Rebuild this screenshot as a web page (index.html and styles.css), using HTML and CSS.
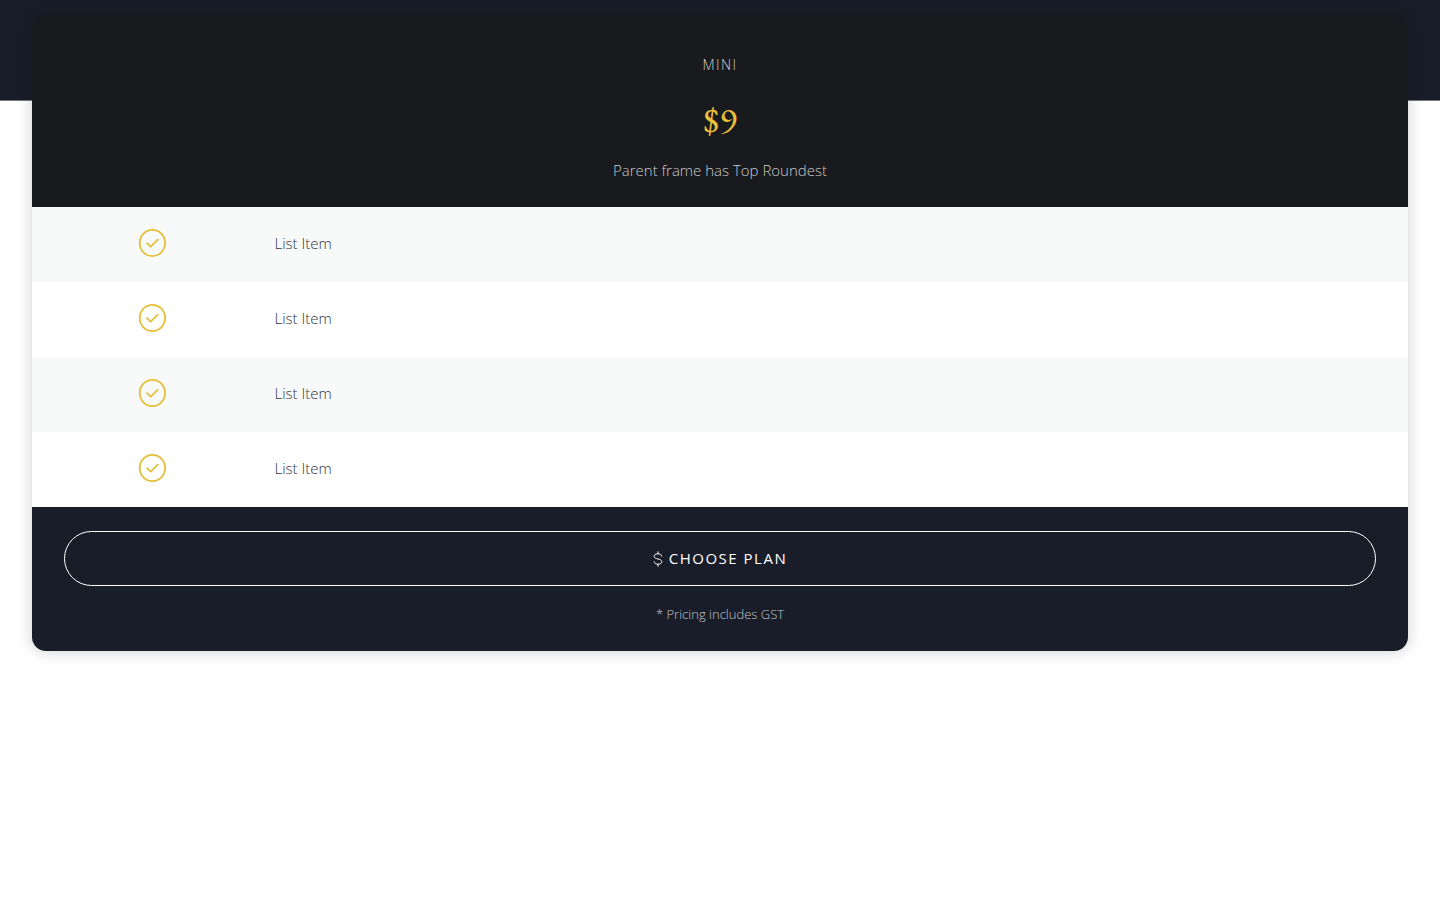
FILE: index.html
```html
<!DOCTYPE html>
<html lang="en">
<head>
  <meta charset="UTF-8" />
  <meta name="viewport" content="width=device-width, initial-scale=1.0" />
  <title>Pricing</title>
  <link rel="stylesheet" href="styles.css">
</head>
<body>
  <svg class="sprite" aria-hidden="true">
    <symbol id="check" viewBox="0 0 28 28">
      <ellipse cx="14.4" cy="14" rx="12.7" ry="13.1" />
      <path d="M9 14.2l3.7 3.5 7.1-7.1" />
    </symbol>
  </svg>

  <div class="banner"></div>

  <main class="plan-card">
    <header class="plan-header">
      <h2 class="plan-name">MINI</h2>
      <p class="plan-price">$9</p>
      <p class="plan-text">Parent frame has Top Roundest</p>
    </header>

    <ul class="plan-list">
      <li class="plan-item">
        <svg class="check-icon"><use href="#check" /></svg>
        <span>List Item</span>
      </li>
      <li class="plan-item">
        <svg class="check-icon"><use href="#check" /></svg>
        <span>List Item</span>
      </li>
      <li class="plan-item">
        <svg class="check-icon"><use href="#check" /></svg>
        <span>List Item</span>
      </li>
      <li class="plan-item">
        <svg class="check-icon"><use href="#check" /></svg>
        <span>List Item</span>
      </li>
    </ul>

    <footer class="plan-footer">
      <button type="button" class="plan-btn">
        <svg class="dollar-icon" viewBox="0 0 10 16" aria-hidden="true">
          <path d="M5 .8v2M5 13.2v2M8.8 5.2C8.8 3.7 7.4 2.8 5 2.8S1.2 3.7 1.2 5.3C1.2 7 2.7 7.5 5 8s3.8 1.1 3.8 2.7c0 1.6-1.5 2.5-3.8 2.5s-3.8-1-3.8-2.5" />
        </svg>
        CHOOSE PLAN
      </button>
      <p class="plan-note">* Pricing includes GST</p>
    </footer>
  </main>
</body>
</html>
```

FILE: styles.css
```css
* {
  box-sizing: border-box;
}

body {
  margin: 0;
  background: #fff;
  font-family: "Open Sans", sans-serif;
  font-size: 15px;
  font-weight: 300;
  line-height: 24px;
}

h2,
p,
ul {
  margin: 0;
  padding: 0;
}

.sprite {
  display: none;
}

.banner {
  height: 101px;
  background: #191d29;
  border-bottom: 1px solid #777a82;
}

.plan-card {
  position: relative;
  margin: -85px 32px 32px;
  border-radius: 14px;
  box-shadow: 0 0 16px rgba(0, 0, 0, 0.2);
  overflow: hidden;
}

.plan-header {
  padding: 37px 32px 25px;
  background: #191a1d;
  color: #c9cacc;
  text-align: center;
}

.plan-name {
  font-size: 14px;
  font-weight: 300;
  letter-spacing: 0.1em;
}

.plan-price {
  margin: 22px 0 17px;
  color: #edc03a;
  font-family: "EB Garamond", "Liberation Serif", serif;
  font-size: 37px;
  font-weight: 400;
  line-height: 42px;
}

.plan-list {
  list-style: none;
  background: #fff;
  color: #31323f;
}

.plan-item {
  display: grid;
  grid-template-columns: 35fr 165fr;
  column-gap: 2px;
  align-items: center;
  padding: 22px 0 25px;
}

.plan-item:nth-child(odd) {
  background: #f8faf9;
}

.check-icon {
  justify-self: center;
  width: 28px;
  height: 28px;
  fill: none;
  stroke: #e5bf3c;
  stroke-width: 1.8;
  stroke-linecap: round;
  stroke-linejoin: round;
}

.plan-footer {
  padding: 24px 32px 25px;
  background: #191d29;
  color: #c3c5ca;
  text-align: center;
}

.plan-btn {
  display: flex;
  justify-content: center;
  align-items: center;
  gap: 6px;
  width: 100%;
  padding: 15px 24px;
  border: 1px solid #fff;
  border-radius: 28px;
  background: transparent;
  color: #fff;
  font-family: inherit;
  font-size: 15px;
  font-weight: 400;
  letter-spacing: 0.1em;
  line-height: 23px;
  cursor: pointer;
}

.dollar-icon {
  width: 10px;
  height: 16px;
  fill: none;
  stroke: #fff;
  stroke-width: 1;
  stroke-linecap: round;
}

.plan-note {
  margin-top: 16px;
  font-size: 13px;
}
```
